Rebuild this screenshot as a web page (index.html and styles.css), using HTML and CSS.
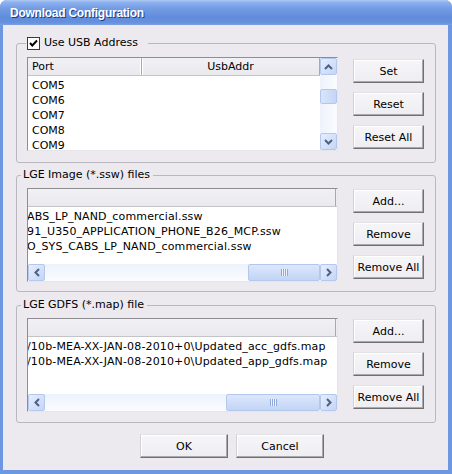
FILE: index.html
```html
<!DOCTYPE html>
<html>
<head>
<meta charset="utf-8">
<title>Download Configuration</title>
<link rel="stylesheet" href="styles.css">
</head>
<body>
<div class="window">
  <div class="titlebar"><span class="title">Download Configuration</span></div>
  <div class="client">
    <fieldset class="group g1">
      <legend class="legend legend-check"><span class="check"><svg width="11" height="11" viewBox="0 0 11 11"><polyline points="2,5 4.3,7.5 9,2.5" fill="none" stroke="#000" stroke-width="1.9"/></svg></span>Use USB Address</legend>
      <div class="row">
        <div class="list">
          <div class="main">
            <div class="header">
              <div class="col col-port">Port</div>
              <div class="col col-usb">UsbAddr</div>
            </div>
            <div class="items items-com">
              <div class="item">COM5</div>
              <div class="item">COM6</div>
              <div class="item">COM7</div>
              <div class="item">COM8</div>
              <div class="item">COM9</div>
            </div>
          </div>
          <div class="vscroll">
            <div class="arrow"><svg width="9" height="6" viewBox="0 0 9 6"><polyline points="1,5 4.5,1.5 8,5" fill="none" stroke="#4D6185" stroke-width="2"/></svg></div>
            <div class="vtrack"><div class="vthumb"></div></div>
            <div class="arrow"><svg width="9" height="6" viewBox="0 0 9 6"><polyline points="1,1 4.5,4.5 8,1" fill="none" stroke="#4D6185" stroke-width="2"/></svg></div>
          </div>
        </div>
        <div class="buttons b1">
          <button class="btn">Set</button>
          <button class="btn">Reset</button>
          <button class="btn">Reset All</button>
        </div>
      </div>
    </fieldset>

    <fieldset class="group g2">
      <legend class="legend">LGE Image (*.ssw) files</legend>
      <div class="row">
        <div class="list">
          <div class="main">
            <div class="header"><div class="col col-full"></div></div>
            <div class="items items-file">
              <div class="item">ABS_LP_NAND_commercial.ssw</div>
              <div class="item">91_U350_APPLICATION_PHONE_B26_MCP.ssw</div>
              <div class="item">O_SYS_CABS_LP_NAND_commercial.ssw</div>
            </div>
            <div class="hscroll">
              <div class="arrow"><svg width="6" height="9" viewBox="0 0 6 9"><polyline points="5,1 1.5,4.5 5,8" fill="none" stroke="#4D6185" stroke-width="2"/></svg></div>
              <div class="htrack"><div class="hthumb thumb-ssw"><span class="grip"></span></div></div>
              <div class="arrow"><svg width="6" height="9" viewBox="0 0 6 9"><polyline points="1,1 4.5,4.5 1,8" fill="none" stroke="#4D6185" stroke-width="2"/></svg></div>
            </div>
          </div>
        </div>
        <div class="buttons b2">
          <button class="btn">Add...</button>
          <button class="btn">Remove</button>
          <button class="btn">Remove All</button>
        </div>
      </div>
    </fieldset>

    <fieldset class="group g3">
      <legend class="legend">LGE GDFS (*.map) file</legend>
      <div class="row">
        <div class="list">
          <div class="main">
            <div class="header"><div class="col col-full"></div></div>
            <div class="items items-file">
              <div class="item">/10b-MEA-XX-JAN-08-2010+0\Updated_acc_gdfs.map</div>
              <div class="item">/10b-MEA-XX-JAN-08-2010+0\Updated_app_gdfs.map</div>
            </div>
            <div class="hscroll">
              <div class="arrow"><svg width="6" height="9" viewBox="0 0 6 9"><polyline points="5,1 1.5,4.5 5,8" fill="none" stroke="#4D6185" stroke-width="2"/></svg></div>
              <div class="htrack"><div class="hthumb thumb-map"><span class="grip"></span></div></div>
              <div class="arrow"><svg width="6" height="9" viewBox="0 0 6 9"><polyline points="1,1 4.5,4.5 1,8" fill="none" stroke="#4D6185" stroke-width="2"/></svg></div>
            </div>
          </div>
        </div>
        <div class="buttons b2">
          <button class="btn">Add...</button>
          <button class="btn">Remove</button>
          <button class="btn">Remove All</button>
        </div>
      </div>
    </fieldset>

    <div class="footer">
      <button class="btn btn-wide">OK</button>
      <button class="btn btn-wide">Cancel</button>
    </div>
  </div>
</div>
</body>
</html>
```
FILE: styles.css
```css
html, body {
  margin: 0;
  padding: 0;
  background: #ffffff;
}
body {
  font-family: "DejaVu Sans", "Liberation Sans", sans-serif;
  font-size: 11px;
  color: #000;
}
.window {
  width: 452px;
  height: 474px;
  box-sizing: border-box;
  display: flex;
  flex-direction: column;
  border-radius: 7px 7px 0 0;
  overflow: hidden;
  background: #6D97E1;
}
.titlebar {
  height: 25px;
  flex: none;
  display: flex;
  align-items: center;
  padding-left: 10px;
  background: linear-gradient(#AECAF5 0, #8DB0EE 10%, #729BE3 35%, #608CDB 70%, #6891DD 90%, #7A9FE3 100%);
}
.title {
  color: #fff;
  font-family: "Liberation Sans", sans-serif;
  font-weight: bold;
  font-size: 12px;
  letter-spacing: -0.25px;
  text-shadow: 1px 1px 0 #1A3C8C;
  margin-top: 1px;
}
.client {
  flex: 1;
  margin: 0 4px 4px 3px;
  background: #ECEAEE;
  display: flex;
  flex-direction: column;
}
.group {
  margin: 0 12px 0 13px;
  padding: 6px 11px 9px 10px;
  border: 1px solid #BAB8BE;
  border-radius: 3px;
  min-width: 0;
}
.g1 { margin-top: 11px; padding-top: 7px; padding-bottom: 11px; }
.g2 { margin-top: 5px; padding-bottom: 9px; }
.g3 { margin-top: 6px; padding-bottom: 10px; }

.legend {
  height: 14px;
  line-height: 14px;
  padding: 0 3px 0 2px;
  margin-left: -6px;
}
.legend-check {
  display: flex;
  align-items: center;
  margin-left: -1px;
  padding: 0 10px 0 0;
}
.check {
  width: 13px;
  height: 13px;
  box-sizing: border-box;
  border: 1px solid #3A3A3A;
  background: #fff;
  margin-left: 1px;
  margin-right: 4px;
  display: flex;
  align-items: center;
  justify-content: center;
}
.check svg { display: block; }

.row {
  display: flex;
  gap: 15px;
  align-items: flex-start;
}
.list {
  width: 311px;
  height: 94px;
  box-sizing: border-box;
  border: 1px solid;
  border-color: #8E8D92 #E6E5E9 #E6E5E9 #8E8D92;
  background: #fff;
  display: flex;
  overflow: hidden;
  flex: none;
}
.main {
  flex: 1;
  min-width: 0;
  display: flex;
  flex-direction: column;
}
.header {
  height: 18px;
  box-sizing: border-box;
  flex: none;
  display: flex;
  background: linear-gradient(#F1F0F4, #EAE9ED);
  border-bottom: 1px solid #C4C3C8;
}
.col {
  line-height: 17px;
  padding-left: 4px;
  box-sizing: border-box;
  border-right: 1px solid #A9A8AD;
  white-space: nowrap;
}
.col-port { width: 114px; box-shadow: inset -1px 0 #fff; }
.col-usb { flex: 1; text-align: center; padding-left: 0; box-shadow: inset 1px 0 #fff; }
.col-full { flex: 1; margin-right: 1px; }

.items {
  flex: 1;
  padding-top: 2px;
  overflow: hidden;
}
.item {
  height: 15px;
  line-height: 15px;
  white-space: nowrap;
}
.items-com .item { padding-left: 4px; }
.items-file .item { margin-left: -1px; letter-spacing: 0.15px; }

.vscroll {
  width: 17px;
  flex: none;
  display: flex;
  flex-direction: column;
  background: linear-gradient(to right, #EDF2FB, #FAFCFF);
}
.arrow {
  width: 17px;
  height: 17px;
  flex: none;
  box-sizing: border-box;
  border: 1px solid #B4C8EE;
  border-radius: 2px;
  background: linear-gradient(135deg, #E6EEFD, #C3D5F6);
  display: flex;
  align-items: center;
  justify-content: center;
}
.arrow svg { display: block; }
.vtrack { flex: 1; }
.vthumb {
  margin-top: 14px;
  height: 15px;
  box-sizing: border-box;
  border: 1px solid #B4C8EE;
  border-radius: 2px;
  background: linear-gradient(to right, #D9E5FA, #C4D6F6);
}
.hscroll {
  height: 17px;
  flex: none;
  display: flex;
  background: linear-gradient(#EDF2FB, #FAFCFF);
}
.htrack {
  flex: 1;
  display: flex;
  justify-content: flex-end;
}
.hthumb {
  height: 17px;
  box-sizing: border-box;
  border: 1px solid #B4C8EE;
  border-radius: 2px;
  background: linear-gradient(#DCE7FB, #C2D4F6);
  display: flex;
  align-items: center;
  justify-content: center;
}
.thumb-ssw { width: 72px; }
.thumb-map { width: 94px; }
.grip {
  width: 7px;
  height: 7px;
  background: repeating-linear-gradient(to right, #8FA9DB 0 1px, #EEF3FD 1px 2px);
}

.buttons {
  display: flex;
  flex-direction: column;
  gap: 9px;
}
.b1 { padding-top: 2px; }
.b2 { padding-top: 1px; }
.btn {
  width: 71px;
  height: 24px;
  box-sizing: border-box;
  padding: 0;
  font-family: "DejaVu Sans", "Liberation Sans", sans-serif;
  font-size: 11px;
  color: #000;
  border: 1px solid;
  border-color: #E2E1E5 #707073 #707073 #D2D1D5;
  box-shadow: inset -1px -1px #A9A8AC, inset 1px 1px #FFFFFF;
  background: linear-gradient(#F6F5F8, #EEEDF1);
  border-radius: 0;
}
.footer {
  display: flex;
  gap: 8px;
  padding-left: 137px;
  margin-top: 11px;
}
.btn-wide { width: 88px; }
```
